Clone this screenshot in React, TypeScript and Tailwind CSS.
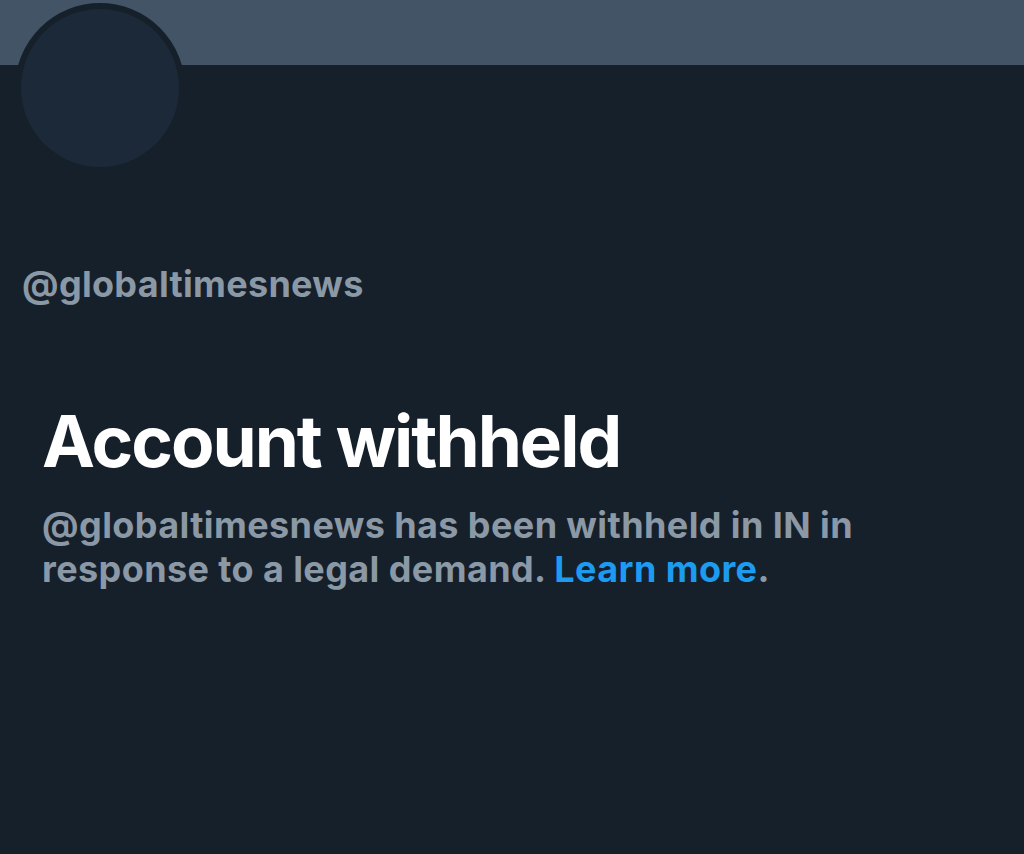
export default function App() {
  return (
    <div
      className="relative h-[854px] w-[1024px] overflow-hidden bg-[#16202b]"
      style={{ fontFamily: "Inter, 'Liberation Sans', sans-serif" }}
    >
      <div className="h-[65px] bg-[#425466]" />

      {/* avatar */}
      <div className="absolute left-[15px] top-[3px] h-[170px] w-[170px] rounded-full border-[6px] border-[#16202b] bg-[#1c2938]" />

      <div className="pl-[22px] pt-[198px]">
        <div className="text-[36px] font-bold leading-[42px] tracking-[0.3px] text-[#8b98a5]">
          @globaltimesnews
        </div>
      </div>

      <div className="px-[42px] pt-[96px]">
        <h1 className="text-[71px] font-bold leading-[80px] tracking-[-2px] text-white">
          Account withheld
        </h1>
        <p className="mt-[22px] max-w-[830px] text-[36px] font-bold leading-[44px] tracking-[0.4px] text-[#8b98a5]">
          @globaltimesnews has been withheld in IN in response to a legal demand.{" "}
          <span className="text-[#1d9bf0]">Learn more</span>.
        </p>
      </div>
    </div>
  );
}
